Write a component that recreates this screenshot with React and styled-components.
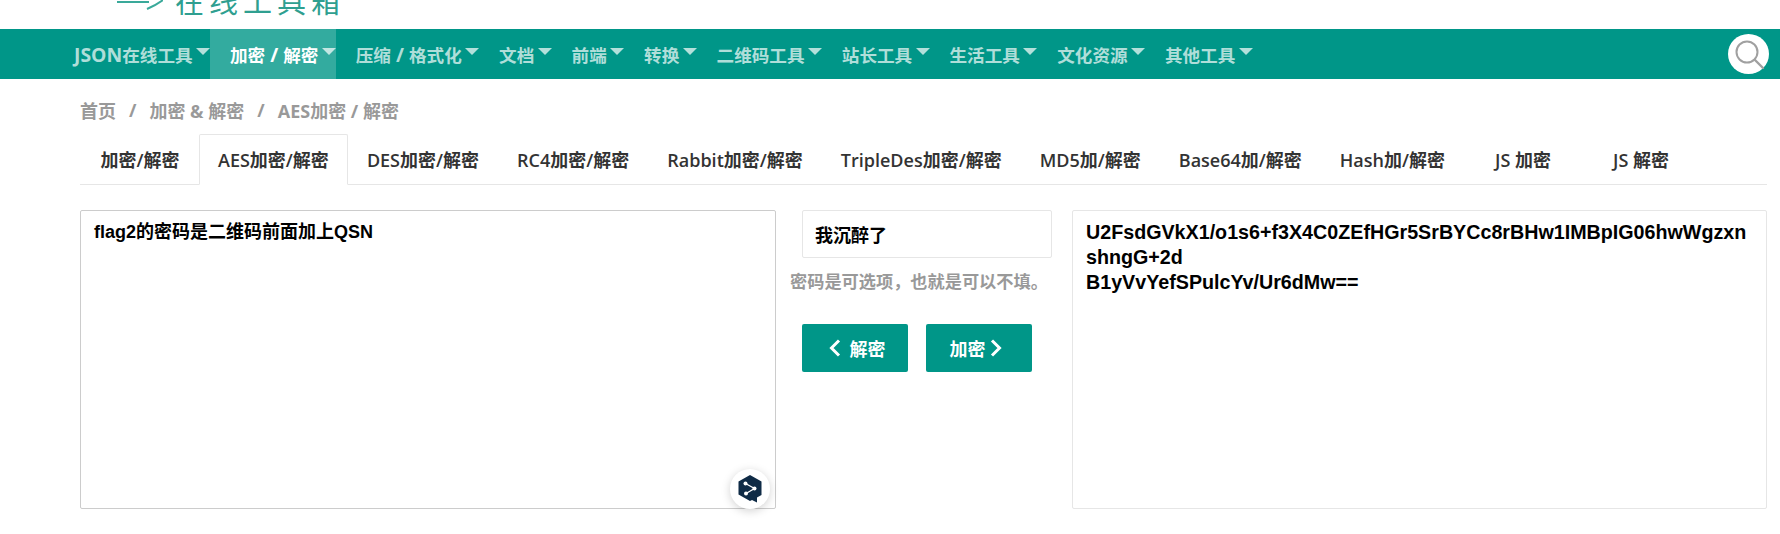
import React from 'react'
import styled, { createGlobalStyle } from 'styled-components'

const GlobalStyle = createGlobalStyle`
  html, body { margin: 0; padding: 0; background: #fff; overflow: hidden; }
  body { font-family: "Open Sans", "Noto Sans CJK SC", sans-serif; }
  * { box-sizing: border-box; }
`

const tabs = ['加密/解密', 'AES加密/解密', 'DES加密/解密', 'RC4加密/解密', 'Rabbit加密/解密', 'TripleDes加密/解密', 'MD5加/解密', 'Base64加/解密', 'Hash加/解密', 'JS 加密', 'JS 解密']
const cipher = 'U2FsdGVkX1/o1s6+f3X4C0ZEfHGr5SrBYCc8rBHw1IMBpIG06hwWgzxnshngG+2d\nB1yVvYefSPulcYv/Ur6dMw=='

export default function App() {
  const navItems = [
    <><Wide>JSON</Wide>在线工具</>,
    <>加密<Wide> / </Wide>解密</>,
    <>压缩<Wide> / </Wide>格式化</>,
    '文档', '前端', '转换', '二维码工具', '站长工具', '生活工具', '文化资源', '其他工具',
  ]

  return (
    <Page>
      <GlobalStyle />
      <Header>
        <LogoArrow width="46" height="12" viewBox="0 0 46 12">
          <path d="M0 2 H32 M46 0 C42 3 37 6 30 9" fill="none" stroke="#3aa99a" strokeWidth="2" />
        </LogoArrow>
        <LogoText>在线工具箱</LogoText>
      </Header>

      <Nav>
        {navItems.map((item, i) => (
          <NavItem key={i} $active={i === 1}>
            <span>{item}</span>
            <Caret />
          </NavItem>
        ))}
        <SearchButton>
          <svg width="36" height="36" viewBox="0 0 36 36" fill="none" stroke="#a0a0a0" strokeWidth="2">
            <circle cx="16" cy="16" r="10.5" />
            <path d="M24 24 L32 32" strokeLinecap="round" strokeWidth="2.4" />
          </svg>
        </SearchButton>
      </Nav>

      <Crumbs>
        <span>首页</span>
        <Slash>/</Slash>
        <span>加密 &amp; 解密</span>
        <Slash>/</Slash>
        <span>AES加密 / 解密</span>
      </Crumbs>

      <Tabs>
        {tabs.map((tab, i) => (
          <Tab key={tab} $active={i === 1}>{tab}</Tab>
        ))}
      </Tabs>

      <Tool>
        <LeftBox>
          <TextBox $border="#ccc" $size={18} readOnly value="flag2的密码是二维码前面加上QSN" />
          <Badge>
            <svg width="26" height="30" viewBox="0 0 26 30">
              <path d="M13 1 L24.5 7.5 V21 L20 23.6 V28.5 L15 25.9 L13 27 L1.5 20.5 V7.5 Z" fill="#0f2b46" />
              <path d="M8.5 9.5 L17.5 14.5 L9 19.5" fill="none" stroke="#fff" strokeWidth="1.3" />
              <circle cx="8.5" cy="9.5" r="2" fill="#fff" />
              <circle cx="17.5" cy="14.5" r="2" fill="#fff" />
              <circle cx="9" cy="19.5" r="2" fill="#fff" />
            </svg>
          </Badge>
        </LeftBox>

        <Middle>
          <Password readOnly value="我沉醉了" />
          <Hint>密码是可选项，也就是可以不填。</Hint>
          <Buttons>
            <ActionButton>
              <Chevron $side="left" width="13" height="18" viewBox="0 0 13 18">
                <path d="M11 1.5 L3.5 9 L11 16.5" />
              </Chevron>
              解密
            </ActionButton>
            <ActionButton>
              加密
              <Chevron $side="right" width="13" height="18" viewBox="0 0 13 18">
                <path d="M2 1.5 L9.5 9 L2 16.5" />
              </Chevron>
            </ActionButton>
          </Buttons>
        </Middle>

        <RightBox>
          <TextBox $border="#e6e6e6" $size={19.7} readOnly value={cipher} />
        </RightBox>
      </Tool>
    </Page>
  )
}

const Page = styled.div`
  width: 1780px;
  height: 534px;
  overflow: hidden;
`

const Header = styled.div`
  height: 29px;
  padding-left: 117px;
  display: flex;
  align-items: flex-end;
  overflow: hidden;
`

const LogoArrow = styled.svg`
  margin-bottom: 17px;
  flex: none;
`

const LogoText = styled.div`
  margin-left: 12px;
  margin-bottom: 14px;
  font-family: "Noto Sans CJK SC", sans-serif;
  font-weight: 400;
  font-size: 29px;
  line-height: 29px;
  letter-spacing: 5px;
  color: #2f9f90;
  white-space: nowrap;
`

const Nav = styled.nav`
  height: 50px;
  background: #009688;
  padding-left: 54px;
  display: flex;
  align-items: stretch;
`

const NavItem = styled.div`
  padding-left: 20px;
  display: flex;
  align-items: center;
  gap: 3.3px;
  font-size: 17.6px;
  font-weight: 700;
  white-space: pre;
  color: ${({ $active }) => ($active ? '#fff' : 'rgba(255,255,255,.7)')};
  background: ${({ $active }) => ($active ? 'rgba(255,255,255,.2)' : 'transparent')};
`

const Wide = styled.span`
  font-size: 1.1em;
`

const Caret = styled.i`
  width: 0;
  height: 0;
  margin-bottom: 6px;
  border-left: 7px solid transparent;
  border-right: 7px solid transparent;
  border-top: 7px solid rgba(255,255,255,.7);
`

const SearchButton = styled.div`
  margin: 5px 11px 0 auto;
  width: 41px;
  height: 40px;
  border-radius: 50%;
  background: #fff;
  display: flex;
  align-items: center;
  justify-content: center;
`

const Crumbs = styled.div`
  height: 40px;
  margin-top: 11px;
  padding-left: 80px;
  display: flex;
  align-items: center;
  font-size: 18px;
  font-weight: 700;
  color: #999;
`

const Slash = styled.span`
  margin: 0 13px;
`

const Tabs = styled.div`
  margin: 4px 13px 0 80px;
  padding-left: 1px;
  height: 51px;
  border-bottom: 1px solid #e6e6e6;
  display: flex;
`

const Tab = styled.div`
  height: 51px;
  padding: 0 18px 1px;
  flex: none;
  min-width: 118px;
  display: flex;
  align-items: center;
  justify-content: center;
  font-size: 18px;
  font-weight: 600;
  color: #333;
  white-space: nowrap;
  border: 1px solid ${({ $active }) => ($active ? '#e6e6e6' : 'transparent')};
  border-bottom-color: ${({ $active }) => ($active ? '#fff' : 'transparent')};
  border-radius: 2px 2px 0 0;
`

const Tool = styled.div`
  margin-top: 25px;
  padding: 0 13px 0 80px;
  display: flex;
  height: 299px;
`

const LeftBox = styled.div`
  position: relative;
  width: 696px;
  flex: none;
`

const RightBox = styled.div`
  width: 695px;
  flex: none;
  margin-left: 20px;
`

const TextBox = styled.textarea`
  display: block;
  width: 100%;
  height: 100%;
  padding: 9px 13px;
  border: 1px solid ${({ $border }) => $border};
  border-radius: 2px;
  outline: none;
  resize: none;
  overflow: hidden;
  background: #fff;
  color: #000;
  font-family: "Liberation Sans", "Noto Sans CJK SC", sans-serif;
  font-size: ${({ $size }) => $size}px;
  font-weight: 700;
  line-height: 25px;
`

const Badge = styled.div`
  position: absolute;
  right: 6px;
  bottom: 0;
  width: 40px;
  height: 40px;
  border-radius: 50%;
  background: #fff;
  box-shadow: 0 2px 10px rgba(0,0,0,.18);
  display: flex;
  align-items: center;
  justify-content: center;
`

const Middle = styled.div`
  width: 250px;
  flex: none;
  margin-left: 26px;
  display: flex;
  flex-direction: column;
`

const Password = styled.input`
  width: 250px;
  height: 48px;
  padding: 0 12px;
  border: 1px solid #e6e6e6;
  border-radius: 2px;
  outline: none;
  color: #000;
  font-family: "Liberation Sans", "Noto Sans CJK SC", sans-serif;
  font-size: 18px;
  font-weight: 700;
`

const Hint = styled.div`
  margin: 12px 0 0 -12px;
  width: 274px;
  line-height: 24px;
  font-size: 17.2px;
  font-weight: 700;
  color: #999;
  white-space: nowrap;
`

const Buttons = styled.div`
  margin-top: 30px;
  display: flex;
  gap: 18px;
`

const ActionButton = styled.button`
  width: 106px;
  height: 48px;
  padding: 0;
  border: none;
  border-radius: 2px;
  background: #009688;
  color: #fff;
  font-family: "Open Sans", "Noto Sans CJK SC", sans-serif;
  font-size: 18px;
  font-weight: 700;
  display: flex;
  align-items: center;
  justify-content: center;
`

const Chevron = styled.svg`
  fill: none;
  stroke: #fff;
  stroke-width: 3;
  margin: ${({ $side }) => ($side === 'left' ? '0 9px 0 3px' : '0 6px 0 4px')};
`
